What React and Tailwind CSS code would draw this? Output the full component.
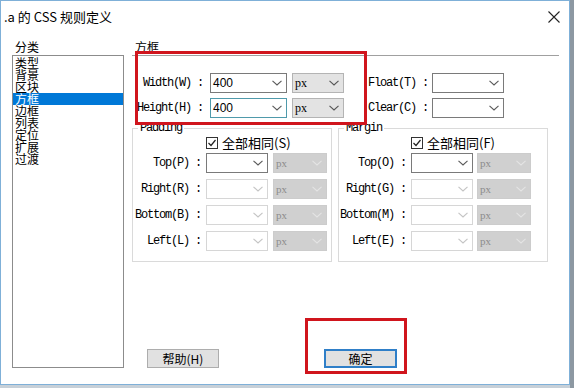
import React from 'react';

const items = ['类型', '背景', '区块', '方框', '边框', '列表', '定位', '扩展', '过渡'];

const boxStyles = {
  input: 'bg-white border-[#7a7a7a]',
  focus: 'bg-white border-[#4f9aab]',
  disabled: 'bg-white border-[#d6d6d6]',
  unit: 'bg-[#e3e3e3] border-[#b4b4b4] text-black',
  unitOff: 'bg-[#d0d0d0] border-[#cccccc] text-[#8c8c8c]',
};

const chevronColor = {
  input: '#5a5a5a',
  focus: '#5a5a5a',
  disabled: '#c4c4c4',
  unit: '#555555',
  unitOff: '#e4e4e4',
};

function Chevron({ color }) {
  return (
    <svg width="10" height="6" viewBox="0 0 10 6" className="shrink-0">
      <polyline points="0.5,0.8 5,5 9.5,0.8" fill="none" stroke={color} strokeWidth="1.1" />
    </svg>
  );
}

function Box({ value, variant = 'input', width }) {
  return (
    <div className={`${width} h-[20px] border ${boxStyles[variant]} flex items-center justify-between pl-[2px] pr-[4px] font-['Liberation_Sans',sans-serif] text-[12px] tracking-normal`}>
      <span className={variant === 'unitOff' ? "font-['Liberation_Serif',serif] text-[11px]" : variant.startsWith('unit') ? "font-['Liberation_Serif',serif] text-[12px]" : ''}>{value}</span>
      <Chevron color={chevronColor[variant]} />
    </div>
  );
}

function Checkbox({ label }) {
  return (
    <div className="flex items-center h-[14px]">
      <div className="w-[12px] h-[12px] border border-[#333] bg-white flex items-center justify-center">
        <svg width="10" height="10" viewBox="0 0 10 10">
          <polyline points="1.5,5 4,7.5 8.5,2" fill="none" stroke="#222" strokeWidth="1.2" />
        </svg>
      </div>
      <span className="ml-[4px] text-[13px] leading-[14px] font-['Noto_Sans_CJK_SC',sans-serif]">{label}</span>
    </div>
  );
}

function Group({ title, check, rows, widthCls, labelW, pad, gap }) {
  return (
    <fieldset className={`${widthCls} h-[140px] border border-[#dadada]`}>
      <legend className="ml-[5px] px-[2px] text-[12px] leading-[12px] tracking-[-1.2px] font-['Liberation_Mono',monospace]">{title}</legend>
      <div className={`mt-[2px] ${pad}`}>
        <Checkbox label={check} />
      </div>
      <div className="mt-[3px] flex flex-col gap-[6px]">
        {rows.map((r, i) => (
          <div key={r} className="flex items-center h-[20px]">
            <div className={`${labelW} text-right text-[12px] tracking-[-1.2px] font-['Liberation_Mono',monospace] whitespace-pre`}>{r} :</div>
            <div className="ml-[5px]">
              <Box variant={i === 0 ? 'input' : 'disabled'} width="w-[62px]" />
            </div>
            <div className={gap}>
              <Box value="px" variant="unitOff" width="w-[54px]" />
            </div>
          </div>
        ))}
      </div>
    </fieldset>
  );
}

export default function App() {
  return (
    <div className="relative w-[574px] h-[388px] overflow-hidden bg-[#c7d0d8]">
      <div className="w-[570px] h-[385px] bg-white border border-[#7fb0d8] flex flex-col text-black">
        {/* title bar */}
        <div className="h-[32px] flex items-center justify-between pl-[3px] pr-[9px] shrink-0">
          <span className="text-[13px] font-['Noto_Sans_CJK_SC',sans-serif]">.a 的 CSS 规则定义</span>
          <svg width="12" height="12" viewBox="0 0 12 12">
            <path d="M0.5 0.5 L11.5 11.5 M11.5 0.5 L0.5 11.5" stroke="#222" strokeWidth="1.1" />
          </svg>
        </div>

        <div className="flex flex-1">
          {/* category list */}
          <div className="ml-[11px] w-[112px] flex flex-col">
            <div className="mt-[7px] pl-[3px] text-[12px] leading-[14px] font-['Noto_Sans_CJK_SC',sans-serif]">分类</div>
            <div className="mt-[1px] h-[313px] border border-[#8c8c8c] pt-[1px] font-['Noto_Sans_CJK_SC',sans-serif] text-[12px]">
              {items.map((it) => (
                <div
                  key={it}
                  className={`h-[12px] leading-[12px] pl-[2px] ${it === '方框' ? 'bg-[#0078d7] text-white' : ''}`}
                >
                  {it}
                </div>
              ))}
            </div>
          </div>

          {/* right panel */}
          <div className="ml-[8px] w-[427px] flex flex-col">
            <div className="mt-[7px] pl-[3px] text-[12px] leading-[14px] font-['Noto_Sans_CJK_SC',sans-serif]">方框</div>
            <div className="mt-[1px] h-px bg-[#a0a0a0]" />

            <div className="mt-[17px] flex flex-col gap-[5px] text-[12px] tracking-[-1.2px] font-['Liberation_Mono',monospace]">
              <div className="flex items-center h-[20px]">
                <div className="w-[71px] text-right">Width(W) :</div>
                <div className="ml-[7px]"><Box value="400" variant="input" width="w-[77px]" /></div>
                <div className="ml-[5px]"><Box value="px" variant="unit" width="w-[52px]" /></div>
                <div className="ml-[24px] w-[62px]">Float(T) :</div>
                <div className="ml-[2px]"><Box variant="input" width="w-[72px]" /></div>
              </div>
              <div className="flex items-center h-[20px]">
                <div className="w-[71px] text-right">Height(H) :</div>
                <div className="ml-[7px]"><Box value="400" variant="focus" width="w-[77px]" /></div>
                <div className="ml-[5px]"><Box value="px" variant="unit" width="w-[52px]" /></div>
                <div className="ml-[24px] w-[62px]">Clear(C) :</div>
                <div className="ml-[2px]"><Box variant="input" width="w-[72px]" /></div>
              </div>
            </div>

            <div className="mt-[4px] flex gap-[6px]">
              <Group
                title="Padding"
                check="全部相同(S)"
                rows={['Top(P)', 'Right(R)', 'Bottom(B)', 'Left(L)']}
                widthCls="w-[200px]"
                labelW="w-[68px]"
                pad="pl-[73px]"
                gap="ml-[5px]"
              />
              <Group
                title="Margin"
                check="全部相同(F)"
                rows={['Top(O)', 'Right(G)', 'Bottom(M)', 'Left(E)']}
                widthCls="w-[210px]"
                labelW="w-[67px]"
                pad="pl-[72px]"
                gap="ml-[4px]"
              />
            </div>

            <div className="mt-[87px] flex">
              <button className="ml-[15px] w-[72px] h-[19px] bg-[#e1e1e1] border border-[#adadad] text-[12px] leading-[17px] font-['Noto_Sans_CJK_SC',sans-serif]">
                帮助(H)
              </button>
              <button className="ml-[105px] w-[73px] h-[19px] bg-[#e1e1e1] border-2 border-[#2f7fc8] text-[12px] leading-[15px] font-['Noto_Sans_CJK_SC',sans-serif]">
                确定
              </button>
            </div>
          </div>
        </div>
      </div>

      {/* desktop strip on the right */}
      <div className="absolute right-0 top-0 w-[4px] h-full bg-[#8d98a2]" />

      {/* red annotation boxes */}
      <div className="absolute left-[135px] top-[51px] w-[232px] h-[74px] border-[3px] border-[#d0151d]" />
      <div className="absolute left-[305px] top-[318px] w-[102px] h-[56px] border-[3px] border-[#d0151d]" />
    </div>
  );
}
